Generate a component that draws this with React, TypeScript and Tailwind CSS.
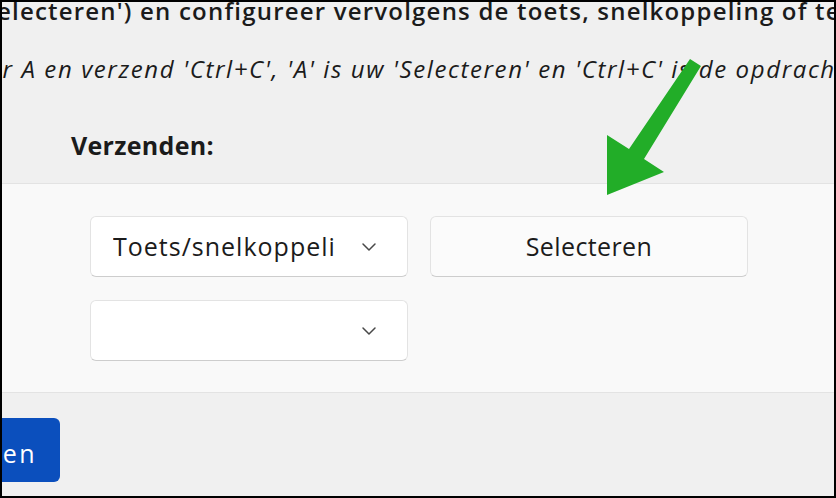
import { ChevronDown } from 'lucide-react';

const font = { fontFamily: '"Open Sans", "Noto Sans", sans-serif' };

function Dropdown({ label }: { label?: string }) {
  return (
    <div className="flex h-[61px] w-[318px] items-center rounded-[6px] border border-[#e3e3e3] border-b-[#cdcdcd] bg-white pl-[22px] pr-[26px]">
      <div className="w-[224px] overflow-hidden whitespace-nowrap text-[25px] tracking-[1px] text-[#1b1b1b]">{label}</div>
      <div className="flex-1" />
      <ChevronDown className="h-[24px] w-[24px] text-[#484848]" strokeWidth={1.5} />
    </div>
  );
}

export default function App() {
  return (
    <div
      className="relative h-[498px] w-[836px] overflow-hidden border-2 border-black bg-[#f0f0f0] text-[#1b1b1b]"
      style={font}
    >
      {/* instructions */}
      <div className="mt-[-7px] ml-[-5px] whitespace-nowrap text-[24px] font-semibold leading-[32px] tracking-[1.2px]">
        electeren') en configureer vervolgens de toets, snelkoppeling of tekst
      </div>
      <div className="mt-[26px] ml-[-13px] whitespace-nowrap text-[24px] italic leading-[32px] tracking-[1.6px]">
        er A en verzend 'Ctrl+C', 'A' is uw 'Selecteren' en 'Ctrl+C' is de opdracht
      </div>

      <div className="mt-[44px] ml-[69px] text-[25px] font-bold leading-[32px] tracking-[0.3px]">Verzenden:</div>

      {/* panel */}
      <div className="mt-[22px] border-y border-[#e3e3e3] bg-[#f9f9f9] pt-[32px] pb-[31px] pl-[88px]">
        <div className="flex gap-[22px]">
          <Dropdown label="Toets/snelkoppeling" />
          <button className="h-[61px] w-[318px] rounded-[6px] border border-[#e3e3e3] border-b-[#cdcdcd] bg-[#fbfbfb] text-[25px] tracking-[0.4px] text-[#1b1b1b]">
            Selecteren
          </button>
        </div>
        <div className="mt-[23px]">
          <Dropdown />
        </div>
      </div>

      <div className="mt-[25px] flex">
        <button className="ml-[-142px] h-[64px] w-[200px] rounded-[6px] bg-[#0b4fbd] pt-[8px] pr-[23px] text-right text-[25px] tracking-[2.5px] text-white">
          Toevoegen
        </button>
      </div>

      {/* annotation arrow */}
      <svg className="pointer-events-none absolute left-0 top-0" width="836" height="498">
        <polygon
          points="688,57 699,64 642,157 662,170 605,193 605,133 627,147"
          fill="#22ad28"
        />
      </svg>
    </div>
  );
}
